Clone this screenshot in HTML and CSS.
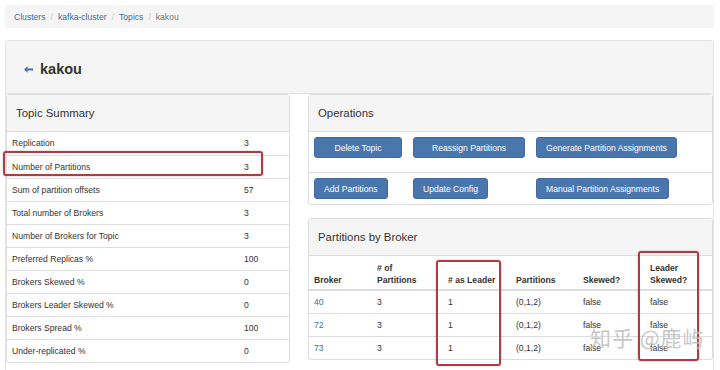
FILE: index.html
```html
<!DOCTYPE html>
<html lang="en">
<head>
    <meta charset="UTF-8">
    <title>kakou - Topic</title>
    <link rel="stylesheet" href="styles.css">
</head>
<body>

    <!-- Breadcrumb -->
    <div class="breadcrumb">
        <a href="#">Clusters</a><span class="sep">/</span>
        <a href="#">kafka-cluster</a><span class="sep">/</span>
        <a href="#">Topics</a><span class="sep">/</span>
        <span class="active">kakou</span>
    </div>

    <div class="page-panel">
        <div class="page-heading">
            <svg class="back-arrow" width="9" height="7" viewBox="0 0 9 7">
                <path d="M0 3.5 L3.6 0.3 L3.6 2.4 L9 2.4 L9 4.6 L3.6 4.6 L3.6 6.7 Z" fill="#4a72a8"/>
            </svg>
            <h3>kakou</h3>
        </div>

        <div class="page-body">
            <!-- Topic Summary -->
            <div class="panel summary">
                <div class="panel-heading">Topic Summary</div>
                <table class="summary-table">
                    <tr><td>Replication</td><td>3</td></tr>
                    <tr><td>Number of Partitions</td><td>3</td></tr>
                    <tr><td>Sum of partition offsets</td><td>57</td></tr>
                    <tr><td>Total number of Brokers</td><td>3</td></tr>
                    <tr><td>Number of Brokers for Topic</td><td>3</td></tr>
                    <tr><td>Preferred Replicas %</td><td>100</td></tr>
                    <tr><td>Brokers Skewed %</td><td>0</td></tr>
                    <tr><td>Brokers Leader Skewed %</td><td>0</td></tr>
                    <tr><td>Brokers Spread %</td><td>100</td></tr>
                    <tr><td>Under-replicated %</td><td>0</td></tr>
                </table>
                <div class="mark mark-partitions"></div>
            </div>

            <div class="right-col">
                <!-- Operations -->
                <div class="panel">
                    <div class="panel-heading">Operations</div>
                    <div class="ops-row first">
                        <button class="btn w-delete">Delete Topic</button>
                        <button class="btn w-reassign">Reassign Partitions</button>
                        <button class="btn">Generate Partition Assignments</button>
                    </div>
                    <div class="ops-row">
                        <button class="btn">Add Partitions</button>
                        <button class="btn">Update Config</button>
                        <button class="btn">Manual Partition Assignments</button>
                    </div>
                </div>

                <!-- Partitions by Broker -->
                <div class="panel brokers">
                    <div class="panel-heading">Partitions by Broker</div>
                    <table class="broker-table">
                        <colgroup>
                            <col style="width: 63px">
                            <col style="width: 71px">
                            <col style="width: 68px">
                            <col style="width: 67px">
                            <col style="width: 67px">
                            <col>
                        </colgroup>
                        <thead>
                            <tr>
                                <th>Broker</th>
                                <th># of<br>Partitions</th>
                                <th># as Leader</th>
                                <th>Partitions</th>
                                <th>Skewed?</th>
                                <th>Leader<br>Skewed?</th>
                            </tr>
                        </thead>
                        <tbody>
                            <tr><td><a href="#">40</a></td><td>3</td><td>1</td><td>(0,1,2)</td><td>false</td><td>false</td></tr>
                            <tr><td><a href="#">72</a></td><td>3</td><td>1</td><td>(0,1,2)</td><td>false</td><td>false</td></tr>
                            <tr><td><a href="#">73</a></td><td>3</td><td>1</td><td>(0,1,2)</td><td>false</td><td>false</td></tr>
                        </tbody>
                    </table>
                    <div class="mark mark-leader"></div>
                    <div class="mark mark-skewed"></div>
                    <div class="watermark">知乎 @鹿屿</div>
                </div>
            </div>
        </div>
    </div>

</body>
</html>
```

FILE: styles.css
```css
* {
    margin: 0;
    padding: 0;
    box-sizing: border-box;
}

body {
    padding: 5px 6px 0 5px;
    font-family: "Liberation Sans", Arial, sans-serif;
    font-size: 8.6px;
    color: #333;
    background: #fff;
    overflow: hidden;
    height: 370px;
}

a {
    color: #3d6d9e;
    text-decoration: none;
}

/* Breadcrumb */
.breadcrumb {
    height: 23px;
    display: flex;
    align-items: center;
    padding: 0 9px;
    background: #f5f5f5;
    border-radius: 3px;
}

.breadcrumb .sep {
    color: #ccc;
    padding: 0 5px;
}

.breadcrumb .active {
    color: #777;
}

/* Halaman utama */
.page-panel {
    margin-top: 12px;
    border: 1px solid #e3e3e3;
    border-radius: 3px;
    padding-bottom: 40px;
}

.page-heading {
    height: 53px;
    display: flex;
    align-items: center;
    padding: 4px 0 0 18px;
    background: #f5f5f5;
    border-bottom: 1px solid #e0e0e0;
}

.back-arrow {
    margin-right: 7px;
}

.page-heading h3 {
    font-size: 14.5px;
    font-weight: bold;
    color: #333;
}

.page-body {
    display: flex;
    gap: 18px;
    align-items: flex-start;
}

/* Panel */
.panel {
    position: relative;
    border: 1px solid #ddd;
    border-radius: 3px;
    background: #fff;
}

.panel-heading {
    height: 37px;
    display: flex;
    align-items: center;
    padding: 0 9px;
    font-size: 11.4px;
    color: #333;
    background: #f5f5f5;
    border-bottom: 1px solid #ddd;
}

.summary {
    width: 284px;
}

.right-col {
    flex: 1;
    display: flex;
    flex-direction: column;
    gap: 13px;
}

/* Tabel ringkasan */
.summary-table {
    width: 100%;
    border-collapse: collapse;
}

.summary-table td {
    height: 23px;
    padding: 0 5px;
    border-top: 1px solid #ddd;
}

.summary-table tr:first-child td {
    border-top: none;
}

.summary-table td:first-child {
    width: 232px;
}

/* Operations */
.ops-row {
    display: grid;
    grid-template-columns: 88px 112px auto;
    column-gap: 11px;
    justify-items: start;
    padding: 5px 5px;
}

.ops-row.first {
    padding-bottom: 14px;
    border-bottom: 1px solid #ddd;
}

.btn {
    height: 21px;
    padding: 0 9px;
    font-family: inherit;
    font-size: 8.6px;
    color: #fff;
    background: #4a76ae;
    border: 1px solid #41699c;
    border-radius: 3px;
    cursor: pointer;
}

.btn.w-delete {
    width: 88px;
}

.btn.w-reassign {
    width: 112px;
}

/* Tabel broker */
.broker-table {
    width: 100%;
    border-collapse: collapse;
    table-layout: fixed;
}

.broker-table th {
    text-align: left;
    vertical-align: bottom;
    line-height: 12px;
    padding: 6px 5px 3px;
    border-bottom: 2px solid #ddd;
}

.broker-table td {
    height: 23px;
    padding: 0 5px;
    border-top: 1px solid #ddd;
}

.broker-table tbody tr:first-child td {
    border-top: none;
}

/* Kotak merah penanda */
.mark {
    position: absolute;
    border: 2px solid #b23a42;
    border-radius: 3px;
    box-shadow: 0 0 2px rgba(0, 0, 0, 0.3);
}

.mark-partitions {
    left: -4px;
    top: 56px;
    width: 260px;
    height: 25px;
}

.mark-leader {
    left: 127px;
    top: 41px;
    width: 65px;
    height: 106px;
}

.mark-skewed {
    left: 329px;
    top: 32px;
    width: 61px;
    height: 110px;
}

.watermark {
    position: absolute;
    left: 281px;
    top: 103px;
    font-family: "Noto Sans CJK SC", sans-serif;
    font-size: 21px;
    letter-spacing: 1px;
    color: rgba(140, 140, 140, 0.5);
    text-shadow: 0 0 1px rgba(255, 255, 255, 0.9);
    white-space: nowrap;
}
```
